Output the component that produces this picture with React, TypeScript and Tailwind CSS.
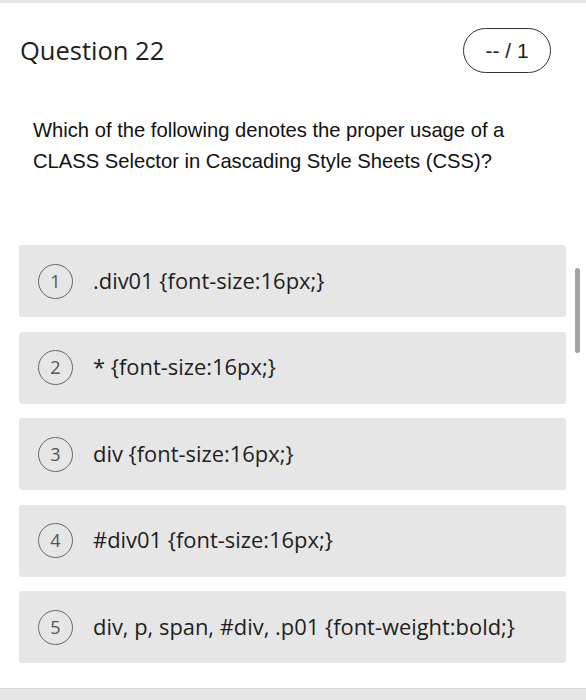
import React from "react";

const options = [
  ".div01 {font-size:16px;}",
  "* {font-size:16px;}",
  "div {font-size:16px;}",
  "#div01 {font-size:16px;}",
  "div, p, span, #div, .p01 {font-weight:bold;}",
];

export default function App() {
  return (
    <div className="relative w-[586px] h-[700px] bg-white overflow-hidden flex flex-col">
      <div className="h-[3px] bg-[#e6e6e6] shrink-0" />
      <div className="flex items-center justify-between mt-[25px] pl-[20px] pr-[35px] h-[45px] shrink-0">
        <div className="text-[25.5px] text-[#1e1e1e] leading-none" style={{ fontFamily: "'Open Sans', sans-serif" }}>
          Question 22
        </div>
        <div
          className="w-[88px] h-[45px] rounded-full border border-[#333] flex items-center justify-center text-[21px] text-[#1e1e1e]"
          style={{ fontFamily: "'Liberation Sans', Arial, sans-serif" }}
        >
          -- / 1
        </div>
      </div>
      <div
        className="mt-[42px] pl-[33px] pr-[30px] text-[20.2px] leading-[31px] text-[#111]"
        style={{ fontFamily: "'Liberation Sans', Arial, sans-serif" }}
      >
        Which of the following denotes the proper usage of a
        <br />
        CLASS Selector in Cascading Style Sheets (CSS)?
      </div>
      <div className="mt-[68px] ml-[19px] w-[547px] flex flex-col gap-[14.5px]">
        {options.map((o, i) => (
          <div key={i} className="h-[72px] bg-[#e6e6e6] rounded-[3px] flex items-center pl-[19px]">
            <div
              className="w-[35px] h-[35px] rounded-full border-[1.5px] border-[#666] flex items-center justify-center text-[18px] text-[#555] shrink-0"
              style={{ fontFamily: "'Open Sans', sans-serif" }}
            >
              {i + 1}
            </div>
            <div className="ml-[20px] text-[21.9px] text-[#1e1e1e]" style={{ fontFamily: "'Open Sans', sans-serif" }}>
              {o}
            </div>
          </div>
        ))}
      </div>
      <div className="absolute left-0 right-0 bottom-0 h-[12px] bg-[#e6e6e6] border-t border-[#d6d6d6]" />
      <div className="absolute left-[575px] top-[268px] w-[5px] h-[85px] rounded-full bg-[#a3a3a3]" />
    </div>
  );
}
